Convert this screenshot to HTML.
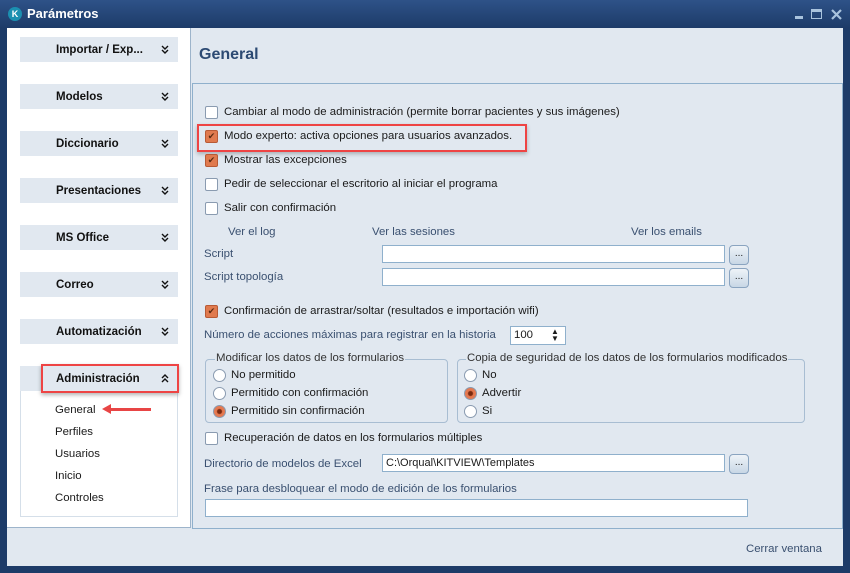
<!DOCTYPE html>
<html><head><meta charset="utf-8"><style>
*{margin:0;padding:0;box-sizing:border-box}
body{width:850px;height:573px;background:#1d3b68;font-family:"Liberation Sans",sans-serif;font-size:11.4px;color:#1a1a1a;position:relative;overflow:hidden}
.a{position:absolute;white-space:nowrap}
.title{left:0;top:0;width:850px;height:28px;background:linear-gradient(#2e5288,#1d3b68)}
.cl{left:7px;top:28px;width:836px;height:538px;background:#e1e8f0}
.left{left:7px;top:28px;width:184px;height:500px;background:#fff;border-right:1px solid #9db4cb;border-bottom:1px solid #9db4cb}
.hd{left:20px;width:158px;height:25px;background:#e1e8f0;font-weight:bold;font-size:11.5px;color:#111;padding:7px 0 0 36px}
.hd svg{position:absolute;right:9px;top:8px}
.cb{width:13px;height:13px;border:1px solid #8a9bb0;background:#fff;border-radius:2px}
.cb.on{background:#e07a4e;border-color:#b85a35;color:#5a2a10;font-size:9px;line-height:11px;text-align:center}
.rd{width:13px;height:13px;border:1px solid #8a9bb0;background:#fff;border-radius:50%}
.rd.on{background:radial-gradient(#7a2a10 0 2px,#e57950 3px)}
.inp{background:#fff;border:1px solid #8fb0cc;height:18px}
.btn{width:20px;height:20px;border:1px solid #8aa4c0;border-radius:4px;background:linear-gradient(#eef3f8,#c8d7e6);font-size:10px;text-align:center;line-height:15px}
.lbl{color:#3a5070}
.gb{border:1px solid #a8bdd2;border-radius:4px}
.leg{background:#e1e8f0;padding:0 1px;color:#333}
</style></head><body>
<div class="a title"></div>
<div class="a" style="left:8px;top:7px;width:14px;height:14px;border-radius:50%;background:#1b8fb0;color:#fff;font-size:9px;font-weight:bold;text-align:center;line-height:14px">K</div>
<div class="a" style="left:27px;top:6px;color:#fff;font-weight:bold;font-size:13px">Parámetros</div>
<div class="a" style="left:795px;top:16px;width:8px;height:3px;background:#a9c3dd"></div>
<div class="a" style="left:811px;top:9px;width:11px;height:10px;border:1.5px solid #a9c3dd;border-top-width:3px"></div>
<svg class="a" style="left:831px;top:9px" width="11" height="11"><path d="M1 1L10 10M10 1L1 10" stroke="#a9c3dd" stroke-width="2.2"/></svg>
<div class="a cl"></div>
<div class="a left"></div>
<div class="a hd" style="top:37px">Importar / Exp...<svg width="8" height="9"><path d="M1 1l3 3 3-3M1 5l3 3 3-3" stroke="#111" stroke-width="1.4" fill="none"/></svg></div>
<div class="a hd" style="top:84px">Modelos<svg width="8" height="9"><path d="M1 1l3 3 3-3M1 5l3 3 3-3" stroke="#111" stroke-width="1.4" fill="none"/></svg></div>
<div class="a hd" style="top:131px">Diccionario<svg width="8" height="9"><path d="M1 1l3 3 3-3M1 5l3 3 3-3" stroke="#111" stroke-width="1.4" fill="none"/></svg></div>
<div class="a hd" style="top:178px">Presentaciones<svg width="8" height="9"><path d="M1 1l3 3 3-3M1 5l3 3 3-3" stroke="#111" stroke-width="1.4" fill="none"/></svg></div>
<div class="a hd" style="top:225px">MS Office<svg width="8" height="9"><path d="M1 1l3 3 3-3M1 5l3 3 3-3" stroke="#111" stroke-width="1.4" fill="none"/></svg></div>
<div class="a hd" style="top:272px">Correo<svg width="8" height="9"><path d="M1 1l3 3 3-3M1 5l3 3 3-3" stroke="#111" stroke-width="1.4" fill="none"/></svg></div>
<div class="a hd" style="top:319px">Automatización<svg width="8" height="9"><path d="M1 1l3 3 3-3M1 5l3 3 3-3" stroke="#111" stroke-width="1.4" fill="none"/></svg></div>
<div class="a hd" style="top:366px">Administración<svg width="8" height="9"><path d="M1 4l3-3 3 3M1 8l3-3 3 3" stroke="#111" stroke-width="1.4" fill="none"/></svg></div>
<div class="a" style="left:20px;top:391px;width:158px;height:126px;border:1px solid #d5dfe9;border-top:none"></div>
<div class="a" style="left:41px;top:364px;width:138px;height:29px;border:2.5px solid #ee4444;box-shadow:0 2px 4px rgba(0,0,0,.3)"></div>
<div class="a" style="left:55px;top:404px">General</div>
<div class="a" style="left:108px;top:408px;width:43px;height:3px;background:#e84545"></div>
<div class="a" style="left:102px;top:404px;width:0;height:0;border-top:5px solid transparent;border-bottom:5px solid transparent;border-right:9px solid #e84545"></div>
<div class="a" style="left:55px;top:426px">Perfiles</div>
<div class="a" style="left:55px;top:448px">Usuarios</div>
<div class="a" style="left:55px;top:470px">Inicio</div>
<div class="a" style="left:55px;top:492px">Controles</div>

<div class="a" style="left:199px;top:46px;font-size:16px;font-weight:bold;color:#2c4a73">General</div>
<div class="a" style="left:192px;top:83px;width:651px;height:446px;border:1px solid #8fb0cc"></div>

<div class="a cb" style="left:205px;top:106px"></div><div class="a" style="left:224px;top:106px">Cambiar al modo de administración (permite borrar pacientes y sus imágenes)</div>
<div class="a cb on" style="left:205px;top:130px">✔</div><div class="a" style="left:224px;top:130px">Modo experto: activa opciones para usuarios avanzados.</div>
<div class="a" style="left:197px;top:124px;width:330px;height:28px;border:2.5px solid #ee4444;box-shadow:0 2px 4px rgba(0,0,0,.25)"></div>
<div class="a cb on" style="left:205px;top:154px">✔</div><div class="a" style="left:224px;top:154px">Mostrar las excepciones</div>
<div class="a cb" style="left:205px;top:178px"></div><div class="a" style="left:224px;top:178px">Pedir de seleccionar el escritorio al iniciar el programa</div>
<div class="a cb" style="left:205px;top:202px"></div><div class="a" style="left:224px;top:202px">Salir con confirmación</div>
<div class="a lbl" style="left:228px;top:226px">Ver el log</div>
<div class="a lbl" style="left:372px;top:226px">Ver las sesiones</div>
<div class="a lbl" style="left:631px;top:226px">Ver los emails</div>
<div class="a lbl" style="left:204px;top:248px">Script</div>
<div class="a inp" style="left:382px;top:245px;width:343px"></div><div class="a btn" style="left:729px;top:245px">...</div>
<div class="a lbl" style="left:204px;top:271px">Script topología</div>
<div class="a inp" style="left:382px;top:268px;width:343px"></div><div class="a btn" style="left:729px;top:268px">...</div>
<div class="a cb on" style="left:205px;top:305px">✔</div><div class="a" style="left:224px;top:305px">Confirmación de arrastrar/soltar (resultados e importación wifi)</div>
<div class="a lbl" style="left:204px;top:329px">Número de acciones máximas para registrar en la historia</div>
<div class="a inp" style="left:510px;top:326px;width:56px;height:19px;padding:2px 3px">100</div>
<div class="a" style="left:551px;top:328px;font-size:8px;line-height:7px">▲<br>▼</div>
<div class="a gb" style="left:205px;top:359px;width:243px;height:64px"></div>
<div class="a leg" style="left:215px;top:352px">Modificar los datos de los formularios</div>
<div class="a rd" style="left:213px;top:369px"></div><div class="a" style="left:231px;top:369px">No permitido</div>
<div class="a rd" style="left:213px;top:387px"></div><div class="a" style="left:231px;top:387px">Permitido con confirmación</div>
<div class="a rd on" style="left:213px;top:405px"></div><div class="a" style="left:231px;top:405px">Permitido sin confirmación</div>
<div class="a gb" style="left:457px;top:359px;width:348px;height:64px"></div>
<div class="a leg" style="left:466px;top:352px">Copia de seguridad de los datos de los formularios modificados</div>
<div class="a rd" style="left:464px;top:369px"></div><div class="a" style="left:482px;top:369px">No</div>
<div class="a rd on" style="left:464px;top:387px"></div><div class="a" style="left:482px;top:387px">Advertir</div>
<div class="a rd" style="left:464px;top:405px"></div><div class="a" style="left:482px;top:405px">Si</div>
<div class="a cb" style="left:205px;top:432px"></div><div class="a" style="left:224px;top:432px">Recuperación de datos en los formularios múltiples</div>
<div class="a lbl" style="left:204px;top:458px">Directorio de modelos de Excel</div>
<div class="a inp" style="left:382px;top:454px;width:343px;padding:2px 3px;font-size:11px">C:\Orqual\KITVIEW\Templates</div><div class="a btn" style="left:729px;top:454px">...</div>
<div class="a lbl" style="left:204px;top:483px">Frase para desbloquear el modo de edición de los formularios</div>
<div class="a inp" style="left:205px;top:499px;width:543px"></div>
<div class="a lbl" style="left:746px;top:543px">Cerrar ventana</div>
</body></html>
